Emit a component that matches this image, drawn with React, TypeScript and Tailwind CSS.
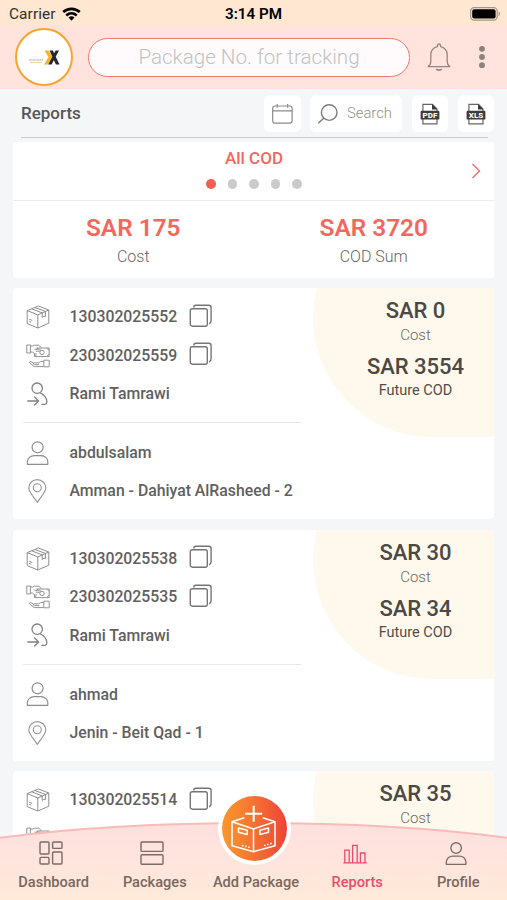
import type { ReactNode } from "react";

interface Shipment {
  packageNo: string;
  codNo?: string;
  sender?: string;
  receiver?: string;
  address?: string;
  cost: string;
  cod?: string;
}

const shipments: Shipment[] = [
  {
    packageNo: "130302025552",
    codNo: "230302025559",
    sender: "Rami Tamrawi",
    receiver: "abdulsalam",
    address: "Amman - Dahiyat AlRasheed - 2",
    cost: "SAR 0",
    cod: "SAR 3554",
  },
  {
    packageNo: "130302025538",
    codNo: "230302025535",
    sender: "Rami Tamrawi",
    receiver: "ahmad",
    address: "Jenin - Beit Qad - 1",
    cost: "SAR 30",
    cod: "SAR 34",
  },
  {
    packageNo: "130302025514",
    cost: "SAR 35",
  },
];

function BoxIcon() {
  return (
    <svg width="24" height="24" viewBox="0 0 24 24" fill="none" stroke="#8d8d8d" strokeWidth="1" strokeLinejoin="round">
      <path d="M1.2 5.6 12.4 1l10.4 4v13.2L11.8 23 1.2 18.6V5.6l10.6 4.3L22.8 5M11.8 9.9V23" />
      <path d="m5.6 3.8 10.6 4.1v4.6l1.6-1.2 1.6.2V6.4L8.8 2.5M3.2 14.2l3 1.2M3.2 16.4l2 .8" />
    </svg>
  );
}

function CodIcon() {
  return (
    <svg width="24" height="24" viewBox="0 0 24 24" fill="none" stroke="#929292" strokeWidth="1" strokeLinejoin="round">
      <path d="M.8 1h3.6v8H.8zM4.4 2h2.2l2-.8h4.2l2.8 2.6M4.4 8h2l2.4 2h2" />
      <path d="M10.6 4h12.6v8.6H8.4v-3M8.6 5.2h4.8c1.4 0 1.4 2 0 2H10" />
      <circle cx="16" cy="8.4" r="2.2" />
      <path d="M12 4.2 9.8 6M20.8 4.2l2.2 2M20.8 12.4l2.2-2M10.6 12.4l-2-2" />
      <path d="M17.8 16.2h5.4v6.6h-5.4zM17.8 17.4h-3l-2 1.4H8.6c-1.5 0-1.5 1.8 0 1.8h4.6M8 19.4l-3.2-1.8c-1.2-.4-2 .8-1 1.6l4.4 3.4h9.6" />
    </svg>
  );
}

function SenderIcon() {
  return (
    <svg width="24" height="24" viewBox="0 0 24 24" fill="none" stroke="#808080" strokeWidth="1.3" strokeLinecap="round" strokeLinejoin="round">
      <circle cx="11.2" cy="6.2" r="5.2" />
      <path d="M14.4 11c3.6 1.6 6 4.4 6.4 8.4.1 2-.6 3-2.4 3h-2.4M1.8 19h10.8M8.6 15l4 4-4 4" />
    </svg>
  );
}

function PersonIcon({ size = 24, color = "#8d8d8d", width = 1.2 }: { size?: number; color?: string; width?: number }) {
  return (
    <svg width={size} height={size} viewBox="0 0 24 24" fill="none" stroke={color} strokeWidth={width} strokeLinejoin="round">
      <circle cx="11.6" cy="6.3" r="5.5" />
      <path d="M1.4 23.3v-2.6c0-3.6 3.2-6 6.8-6H15c3.6 0 6.8 2.4 6.8 6v2.6z" />
    </svg>
  );
}

function PinIcon() {
  return (
    <svg width="24" height="24" viewBox="0 0 24 24" fill="none" stroke="#949494" strokeWidth="1.1" strokeLinejoin="round">
      <path d="M11.3 23.4C8.6 19 2.8 13.4 2.8 8.8a8.5 8.2 0 0 1 17 0c0 4.6-5.8 10.2-8.5 14.6z" />
      <circle cx="11.3" cy="8.8" r="4" />
    </svg>
  );
}

function CopyIcon() {
  return (
    <svg width="24" height="24" viewBox="0 0 24 24" fill="none" stroke="#757575" strokeWidth="1.4">
      <rect x="1.3" y="4.8" width="17" height="17.4" rx="2" />
      <path d="M4.8 3.4c0-1.4.8-2.2 2-2.2h13c1.5 0 2.3.8 2.3 2.2v13.4c0 1.6-.8 2.6-2 2.9" />
    </svg>
  );
}

function FileIcon({ label }: { label: string }) {
  return (
    <svg width="20" height="22" viewBox="0 0 20 22" fill="none">
      <path d="M2.9 20.8V1.4h9.6L17 6v14.8z" stroke="#666" strokeWidth="1.2" />
      <path d="M12 1v5.4h5.4z" fill="#3b3b3b" />
      <rect x="0.6" y="7.8" width="18.8" height="8.8" rx="1.2" fill="#3d3d3d" />
      <text x="10" y="15.1" textAnchor="middle" fontSize="8" fontWeight="800" fill="#fff" fontFamily="Roboto, sans-serif">
        {label}
      </text>
    </svg>
  );
}

function StatusBar() {
  return (
    <div className="flex h-[25px] items-center bg-[#ffe7d2] px-[9px] pt-[4px] text-black">
      <div className="flex flex-1 items-center gap-[6px]">
        <span className="text-[15.4px] tracking-[0.1px] text-[#332f2b]">Carrier</span>
        <svg className="-mt-[2px]" width="19" height="14" viewBox="0 0 20 14" fill="none" stroke="#000" strokeWidth="2.8">
          <path d="M1.3 5C6.3.4 13.7.4 18.7 5M4.5 8.5c3.2-2.9 7.8-2.9 11 0" />
          <path d="M6.8 10.7c1.9-1.7 4.5-1.7 6.4 0L10 14z" fill="#000" stroke="none" />
        </svg>
      </div>
      <span className="text-[15.2px] font-semibold">3:14 PM</span>
      <div className="flex flex-1 justify-end">
        <svg className="-mt-[2px] -mr-[3px]" width="31" height="14" viewBox="0 0 31 14">
          <rect x="0.6" y="0.6" width="26.6" height="12.6" rx="3.6" fill="none" stroke="#a39688" strokeWidth="1.2" />
          <rect x="2.2" y="2.2" width="23.4" height="9.4" rx="2" fill="#000" />
          <path d="M28.6 4.6c1.8.6 1.8 4 0 4.6z" fill="#a39688" />
        </svg>
      </div>
    </div>
  );
}

function Header() {
  return (
    <header className="flex h-16 items-center bg-[#ffe3dc] pl-[15px] pr-[22px]">
      <div className="flex size-[58px] shrink-0 items-center justify-center rounded-full border-2 border-[#f6a52f] bg-white">
        <svg width="32" height="15" viewBox="0 0 32 15">
          <path d="M1 10h14" stroke="#c4c4c4" strokeWidth="1.4" strokeDasharray="1.6 .5" />
          <path d="M2 12.4h12" stroke="#f6d486" strokeWidth="1" />
          <path d="M16.5.5h4l4 6.5-4.5 7.5h-4l4.5-7.5z" fill="#f5b32c" />
          <path d="M21.5.5h3.3l6.7 14h-3.6zM27.6.5H31l-7.4 14h-3.4z" fill="#25272f" />
        </svg>
      </div>
      <div className="ml-[15px] flex h-[39px] w-[322px] shrink-0 items-center justify-center rounded-full border-[1.5px] border-[#f3776e] bg-[#fffbfc]">
        <span className="pt-px text-[20.6px] font-light text-[#c3c3c3]">Package No. for tracking</span>
      </div>
      <svg className="ml-[17px] shrink-0" width="24" height="28" viewBox="0 0 24 28" fill="none" stroke="#98857e" strokeWidth="1.3" strokeLinejoin="round">
        <path d="M1.2 23.6c2-1.4 2.6-3 2.6-5.4v-6.4c0-4.4 3-7.2 6.6-8.2C10.4 1.8 11 .9 12 .9s1.6.9 1.6 2.7c3.6 1 6.6 3.8 6.6 8.2v6.4c0 2.4.6 4 2.6 5.4z" />
        <path d="M9.2 26c1.3 1.4 4.3 1.4 5.6 0" strokeWidth="1.8" />
      </svg>
      <svg className="ml-auto" width="6" height="24" viewBox="0 0 6 24" fill="#8c817d">
        <circle cx="3" cy="3.8" r="2.9" />
        <circle cx="3" cy="12" r="2.9" />
        <circle cx="3" cy="20.2" r="2.9" />
      </svg>
    </header>
  );
}

function Toolbar() {
  return (
    <div className="ml-[21px] mr-[13px] flex h-[48px] items-start pt-[6px]">
      <h1 className="mt-[6px] text-[17px] leading-6 font-medium text-[#55575a]">Reports</h1>
      <div className="ml-auto flex">
        <div className="flex h-[37px] w-[37px] items-center justify-center rounded-md bg-white">
          <svg width="21" height="20" viewBox="0 0 21 20" fill="none" stroke="#8b8b8b" strokeWidth="1.2">
            <rect x="0.7" y="2" width="19.4" height="17.2" rx="2.4" />
            <path d="M.7 6.8h19.4M5.2 0v3.8M15.6 0v3.8" />
          </svg>
        </div>
        <div className="ml-[9px] flex h-[37px] w-[92px] items-center gap-[9px] rounded-md bg-white pl-2">
          <svg width="20" height="20" viewBox="0 0 20 20" fill="none" stroke="#7d7d7d" strokeWidth="1.4" strokeLinecap="round">
            <circle cx="11.2" cy="8.6" r="7.8" />
            <path d="m5.4 14.4-4.6 4.4" />
          </svg>
          <span className="text-[14.8px] font-light text-[#8f8f8f]">Search</span>
        </div>
        <div className="ml-[10px] flex h-[37px] w-[36px] items-center justify-center rounded-md bg-white">
          <FileIcon label="PDF" />
        </div>
        <div className="ml-[10px] flex h-[37px] w-[36px] items-center justify-center rounded-md bg-white">
          <FileIcon label="XLS" />
        </div>
      </div>
    </div>
  );
}

function Summary() {
  return (
    <section className="mx-[13px] mt-[4px] h-[136px] rounded-[3px] bg-white">
      <div className="flex h-[59px] items-center border-b border-[#ececec]">
        <div className="-mt-[5px] ml-[41px] flex-1 text-center">
          <div className="text-[17px] leading-5 font-medium text-[#f2685f]">All COD</div>
          <div className="mt-[11px] flex justify-center gap-3">
            <span className="size-[9.6px] rounded-full bg-[#f45b52]" />
            <span className="size-[9.6px] rounded-full bg-[#cbcbcb]" />
            <span className="size-[9.6px] rounded-full bg-[#cbcbcb]" />
            <span className="size-[9.6px] rounded-full bg-[#cbcbcb]" />
            <span className="size-[9.6px] rounded-full bg-[#cbcbcb]" />
          </div>
        </div>
        <div className="flex w-10 justify-center pl-1">
          <svg width="10" height="16" viewBox="0 0 10 16" fill="none" stroke="#f2685f" strokeWidth="1.3">
            <path d="m1.5 1 7 7-7 7" />
          </svg>
        </div>
      </div>
      <div className="grid grid-cols-2 pt-[13px] text-center">
        <div>
          <div className="text-[24.4px] leading-7 font-semibold text-[#f2685f]">SAR 175</div>
          <div className="mt-[3px] text-base leading-6 font-light text-[#666]">Cost</div>
        </div>
        <div>
          <div className="text-[24.4px] leading-7 font-semibold text-[#f2685f]">SAR 3720</div>
          <div className="mt-[3px] text-base leading-6 font-light text-[#666]">COD Sum</div>
        </div>
      </div>
    </section>
  );
}

function Row({ icon, text, copy }: { icon: ReactNode; text?: string; copy?: boolean }) {
  return (
    <div className="flex h-[38.4px] items-center">
      <span className="w-[44px] shrink-0">{icon}</span>
      <span className="text-[15.8px] font-medium whitespace-nowrap text-[#606060]">{text}</span>
      {text && copy && (
        <span className="-mt-[3px] ml-3">
          <CopyIcon />
        </span>
      )}
    </div>
  );
}

function ShipmentCard({ item }: { item: Shipment }) {
  return (
    <article className="relative flex h-[231px] shrink-0 overflow-hidden rounded-[3px] bg-white">
      <div className="absolute -top-[89px] left-[300px] h-[238px] w-[320px] rounded-full bg-[#fff8ec]" />
      <div className="w-[323px] pt-[10px] pl-[12.5px]">
        <Row icon={<BoxIcon />} text={item.packageNo} copy />
        <Row icon={<CodIcon />} text={item.codNo} copy />
        {item.sender && (
          <>
            <Row icon={<SenderIcon />} text={item.sender} />
            <div className="mt-[9px] mr-[35px] mb-[10.5px] -ml-[3px] h-px bg-[#e6e6e6]" />
            <Row icon={<PersonIcon />} text={item.receiver} />
            <Row icon={<PinIcon />} text={item.address} />
          </>
        )}
      </div>
      <div className="relative flex-1 pt-[9px] pl-px text-center">
        <div className="text-[22px] leading-7 font-medium text-[#4a4946]">{item.cost}</div>
        <div className="text-[15px] leading-5 font-light text-[#6c6a66]">Cost</div>
        {item.cod && (
          <>
            <div className="mt-2 text-[22px] leading-7 font-medium text-[#4a4946]">{item.cod}</div>
            <div className="text-[14.5px] leading-5 text-[#4f4d4a]">Future COD</div>
          </>
        )}
      </div>
    </article>
  );
}

function NavItem({ label, active, children }: { label: string; active?: boolean; children?: ReactNode }) {
  return (
    <div className="flex w-[101.2px] shrink-0 flex-col items-center">
      <div className="flex h-8 items-center">{children}</div>
      <span
        className={`mt-px text-[14.6px] leading-6 font-medium whitespace-nowrap ${
          active ? "text-[#ea4b6b]" : "text-[#79685f]"
        }`}
      >
        {label}
      </span>
    </div>
  );
}

function BottomNav() {
  return (
    <nav className="absolute inset-x-0 bottom-0 h-[108px]">
      <svg className="absolute inset-x-0 bottom-0" width="507" height="80" viewBox="0 0 507 80">
        <defs>
          <linearGradient id="navFill" x1="0" y1="0" x2="0" y2="1">
            <stop offset="0" stopColor="#fee0dd" />
            <stop offset="0.35" stopColor="#fee3de" />
            <stop offset="1" stopColor="#ffead9" />
          </linearGradient>
        </defs>
        <path d="M-2 18Q110 3 254 3t255 15v64H-2z" fill="url(#navFill)" stroke="#f9bbb7" strokeWidth="2" />
      </svg>
      <div className="absolute top-0 left-[217.5px] size-[73px] rounded-full bg-white p-[4px]">
        <div className="flex size-[65px] items-center justify-center rounded-full bg-linear-to-r from-[#f8982c] to-[#ef4136]">
          <svg width="46" height="48" viewBox="0 0 46 48" fill="none" stroke="#fff" strokeWidth="1.5" strokeLinejoin="round">
            <path d="M22.7.7v16M14.2 8.7h17" strokeWidth="2" />
            <path d="M13.3 12.7 1 16.7v24l21.5 6 21.5-6v-24l-12.3-4M1 16.7 22.5 24 44 16.7M22.5 24v22.7" />
            <path d="m7.5 23 8.7 2.2v4.3l-8.7-2.2zM37.5 23l-8.7 2.2v4.3l8.7-2.2z" />
            <path d="m11 40.4 8.6 2.2M33 40.6l8-2.4" strokeDasharray="1.6 1.6" />
          </svg>
        </div>
      </div>
      <div className="relative flex h-full items-start pt-[45px] pl-[3px]">
        <NavItem label="Dashboard">
          <svg className="-ml-[5px]" width="24" height="24" viewBox="0 0 24 24" fill="none" stroke="#7d6b63" strokeWidth="1.4">
            <rect x="1" y="1" width="9" height="12" rx="1" />
            <rect x="13.6" y="1" width="9.4" height="6.4" rx="1" />
            <rect x="1" y="16.4" width="9" height="6.6" rx="1" />
            <rect x="13.6" y="11" width="9.4" height="12" rx="1" />
          </svg>
        </NavItem>
        <NavItem label="Packages">
          <svg className="-ml-[5px]" width="24" height="24" viewBox="0 0 24 24" fill="none" stroke="#7d6b63" strokeWidth="1.4">
            <rect x="1" y="1" width="22" height="9.4" rx="1" />
            <rect x="1" y="13.8" width="22" height="9.4" rx="1" />
          </svg>
        </NavItem>
        <NavItem label="Add Package" />
        <NavItem label="Reports" active>
          <svg className="mt-[2px] -ml-1" width="24" height="20" viewBox="0 0 24 20" fill="none" stroke="#ea4b6b" strokeWidth="1.3">
            <path d="M1.8 18.8V6.2h4.4v12.6M9.6 18.8V1.4h4.6v17.4M17.4 18.8V9h4.6v9.8M.4 18.8h23.2" />
          </svg>
        </NavItem>
        <NavItem label="Profile">
          <span className="-ml-1">
            <PersonIcon size={23} color="#7d6b63" width={1.4} />
          </span>
        </NavItem>
      </div>
    </nav>
  );
}

export default function App() {
  return (
    <div className="relative flex h-[900px] w-[507px] flex-col overflow-hidden bg-[#f4f6f8] font-[Roboto,sans-serif]">
      <StatusBar />
      <Header />
      <Toolbar />
      <div className="ml-[21px] mr-[19px] h-px shrink-0 bg-[#cbccce]" />
      <Summary />
      <main className="mx-[13px] mt-[10px] flex min-h-0 flex-1 flex-col gap-[10.5px] overflow-hidden">
        {shipments.map((item) => (
          <ShipmentCard key={item.packageNo} item={item} />
        ))}
      </main>
      <BottomNav />
    </div>
  );
}
